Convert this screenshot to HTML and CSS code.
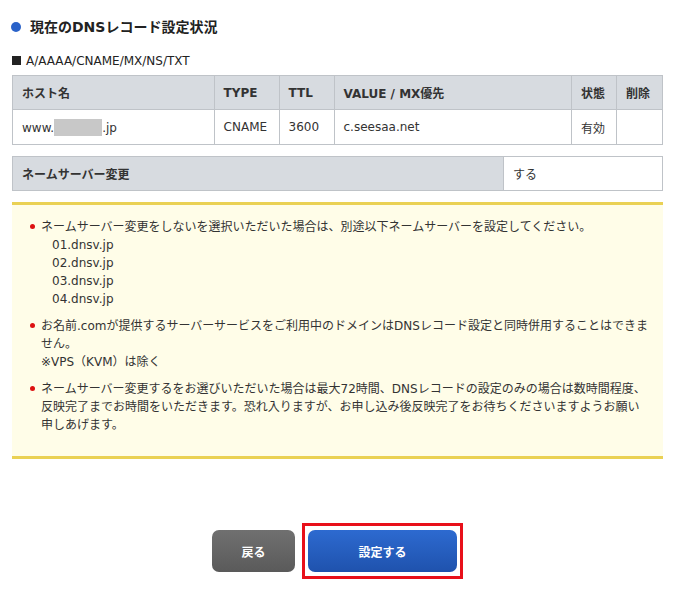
FILE: index.html
```html
<!DOCTYPE html>
<html lang="ja">
<head>
<meta charset="utf-8">
<link rel="stylesheet" href="styles.css">
</head>
<body>
<div class="page">
  <h2 class="title"><span class="dot"></span>現在のDNSレコード設定状況</h2>
  <p class="sub"><span class="sq"></span>A/AAAA/CNAME/MX/NS/TXT</p>
  <table class="rec">
    <colgroup>
      <col class="c1"><col class="c2"><col class="c3"><col class="c4"><col class="c5"><col class="c6">
    </colgroup>
    <tr>
      <th>ホスト名</th><th>TYPE</th><th>TTL</th><th>VALUE / MX優先</th><th>状態</th><th>削除</th>
    </tr>
    <tr>
      <td>www.<span class="mask"></span>.jp</td><td>CNAME</td><td>3600</td><td>c.seesaa.net</td><td>有効</td><td></td>
    </tr>
  </table>
  <table class="ns">
    <tr><th>ネームサーバー変更</th><td>する</td></tr>
  </table>
  <div class="notes">
    <ul>
      <li>ネームサーバー変更をしないを選択いただいた場合は、別途以下ネームサーバーを設定してください。
        <div class="srv">01.dnsv.jp<br>02.dnsv.jp<br>03.dnsv.jp<br>04.dnsv.jp</div>
      </li>
      <li>お名前.comが提供するサーバーサービスをご利用中のドメインはDNSレコード設定と同時併用することはできません。<br>※VPS（KVM）は除く</li>
      <li>ネームサーバー変更するをお選びいただいた場合は最大72時間、DNSレコードの設定のみの場合は数時間程度、<br>反映完了までお時間をいただきます。恐れ入りますが、お申し込み後反映完了をお待ちくださいますようお願い<br>申しあげます。</li>
    </ul>
  </div>
  <div class="actions">
    <button class="btn back">戻る</button>
    <div class="hl"><button class="btn submit">設定する</button></div>
  </div>
</div>
</body>
</html>
```
FILE: styles.css
```css
* { box-sizing: border-box; }
body {
  margin: 0;
  background: #fff;
  color: #333;
  font-family: "DejaVu Sans", "Noto Sans CJK JP", sans-serif;
  font-size: 12px;
}
.page {
  width: 675px;
  padding: 0 12px 0 12px;
}
.title {
  margin: 0;
  padding-top: 14px;
  height: 39px;
  font-size: 14px;
  font-weight: bold;
  color: #222;
  display: flex;
  align-items: center;
  gap: 9px;
  line-height: 18px;
}
.dot {
  width: 10px;
  height: 10px;
  border-radius: 50%;
  background: #2a62c9;
  display: inline-block;
  margin-left: -1px;
}
.sub {
  margin: 14px 0 6px 0;
  display: flex;
  align-items: center;
  gap: 5px;
  line-height: 16px;
  color: #222;
}
.sq {
  width: 9px;
  height: 9px;
  background: #222;
  display: inline-block;
  margin-top: -2px;
}
table {
  border-collapse: collapse;
  width: 651px;
}
.rec th, .rec td, .ns th, .ns td {
  border: 1px solid #bfc3c8;
  text-align: left;
  padding: 0 9px;
  font-size: 12px;
}
.rec th {
  background: #d7dbe0;
  height: 34px;
  font-weight: bold;
  color: #333;
}
.rec td {
  height: 35px;
  background: #fff;
}
.c1 { width: 202px; }
.c2 { width: 65px; }
.c3 { width: 55px; }
.c4 { width: 238px; }
.c5 { width: 45px; }
.c6 { width: 46px; }
.mask {
  display: inline-block;
  width: 48px;
  height: 17px;
  background: #c8c8c8;
  vertical-align: -4px;
}
.ns {
  margin-top: 11px;
}
.ns th {
  background: #d7dbe0;
  height: 34px;
  width: 491px;
  font-weight: bold;
}
.ns td {
  background: #fff;
}
.notes {
  margin-top: 11px;
  background: #fffde8;
  border-top: 3px solid #ead154;
  border-bottom: 3px solid #ead154;
  padding: 13px 5px 22px 18px;
}
.notes ul {
  margin: 0;
  padding: 0;
  list-style: none;
}
.notes li {
  position: relative;
  padding-left: 11px;
  line-height: 18px;
  margin-bottom: 9px;
}
.notes li:last-child { margin-bottom: 0; }
.notes li::before {
  content: "";
  position: absolute;
  left: 0;
  top: 6px;
  width: 5px;
  height: 5px;
  border-radius: 50%;
  background: #d11;
}
.srv { padding-left: 11px; }
.actions {
  display: flex;
  justify-content: center;
  align-items: center;
  gap: 7px;
  margin-top: 64px;
  padding-left: 0;
}
.btn {
  border: none;
  height: 42px;
  border-radius: 7px;
  color: #fff;
  font-weight: bold;
  font-size: 12px;
  font-family: "DejaVu Sans", "Noto Sans CJK JP", sans-serif;
}
.back {
  width: 83px;
  background: linear-gradient(#707070, #5a5a5a);
}
.hl {
  border: 3px solid #e8101a;
  padding: 4px 3px;
}
.submit {
  width: 149px;
  background: linear-gradient(#2d6ad0, #1f52ad);
}
```
